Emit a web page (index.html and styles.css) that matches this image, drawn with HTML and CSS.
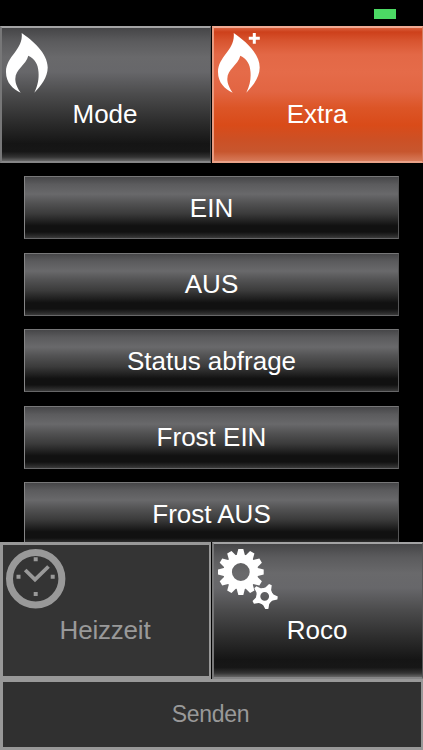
FILE: index.html
```
<!DOCTYPE html>
<html lang="de">
<head>
    <meta charset="UTF-8">
    <meta name="viewport" content="width=device-width, initial-scale=1.0">
    <title>Heizung</title>
    <link rel="stylesheet" href="styles.css">
</head>
<body>
    <div class="app">
        <div class="status-bar">
            <span class="battery"></span>
        </div>

        <div class="tile-row">
            <button class="tile">
                <svg class="tile-icon" viewBox="0 0 60 60">
                    <path d="M15.7 0C26 7 41.700 20 41.700 34.500C41.700 44 35 53 28.300 59.700C32 52 33 46 32.500 39C32 31 29 26 22.300 22.700C20 32 9.300 36 9.300 46C9.300 51 12 56 14.700 59.700C7 56 0 50 0 39C0 23 17.500 17 15.700 0Z"/>
                </svg>
                <span class="tile-label">Mode</span>
            </button>
            <button class="tile active">
                <svg class="tile-icon" viewBox="0 0 60 60">
                    <path d="M15.7 0C26 7 41.700 20 41.700 34.500C41.700 44 35 53 28.300 59.700C32 52 33 46 32.500 39C32 31 29 26 22.300 22.700C20 32 9.300 36 9.300 46C9.300 51 12 56 14.700 59.700C7 56 0 50 0 39C0 23 17.500 17 15.700 0Z"/>
                    <path d="M34.800 0h3v3.800h4v3h-4v4h-3v-4h-4v-3h4Z"/>
                </svg>
                <span class="tile-label">Extra</span>
            </button>
        </div>

        <div class="command-list">
            <button class="command">EIN</button>
            <button class="command">AUS</button>
            <button class="command">Status abfrage</button>
            <button class="command">Frost EIN</button>
            <button class="command">Frost AUS</button>
        </div>

        <div class="tile-row">
            <button class="tile disabled" disabled>
                <svg class="tile-icon" viewBox="0 0 60 60">
                    <circle class="line" cx="29.7" cy="29.700" r="26.200" stroke-width="7"/>
                    <path class="line" d="M19.200 21L29 30.500L42.500 17.500" stroke-width="3.8"/>
                    <path d="M27.700 8.300h4v4h-4ZM27.700 43h4v4h-4ZM10.500 25.700h4v4h-4ZM44.700 25.700h4v4h-4Z"/>
                </svg>
                <span class="tile-label">Heizzeit</span>
            </button>
            <button class="tile">
                <svg class="tile-icon" viewBox="0 0 60 60">
                    <defs>
                        <path id="tooth" d="M-4.300 -16L-2.500 -22.900H2.500L4.300 -16Z"/>
                        <path id="spike" d="M-5.800 -5.500L-3 -8.500L-1.500 -13H1.500L3 -8.500L5.800 -5.500Z"/>
                    </defs>
                    <g transform="translate(22.8 23)">
                        <circle class="ring" r="13.200" stroke-width="8.600"/>
                        <use href="#tooth"/>
                        <use href="#tooth" transform="rotate(30)"/>
                        <use href="#tooth" transform="rotate(60)"/>
                        <use href="#tooth" transform="rotate(90)"/>
                        <use href="#tooth" transform="rotate(120)"/>
                        <use href="#tooth" transform="rotate(150)"/>
                        <use href="#tooth" transform="rotate(180)"/>
                        <use href="#tooth" transform="rotate(210)"/>
                        <use href="#tooth" transform="rotate(240)"/>
                        <use href="#tooth" transform="rotate(270)"/>
                        <use href="#tooth" transform="rotate(300)"/>
                        <use href="#tooth" transform="rotate(330)"/>
                    </g>
                    <g transform="translate(46.7 47.3)">
                        <circle class="ring" r="6.200" stroke-width="3.600"/>
                        <use href="#spike" transform="rotate(26)"/>
                        <use href="#spike" transform="rotate(98)"/>
                        <use href="#spike" transform="rotate(170)"/>
                        <use href="#spike" transform="rotate(242)"/>
                        <use href="#spike" transform="rotate(314)"/>
                    </g>
                </svg>
                <span class="tile-label">Roco</span>
            </button>
        </div>

        <button class="send" disabled>Senden</button>
    </div>
</body>
</html>
```
FILE: styles.css
```
* {
    margin: 0;
    padding: 0;
    box-sizing: border-box;
}

body {
    background: #000;
    font-family: "Liberation Sans", Arial, Helvetica, sans-serif;
    color: #fff;
}

button {
    font-family: inherit;
    color: inherit;
    border: 0;
}

.app {
    display: flex;
    flex-direction: column;
    height: 750px;
    overflow: hidden;
}

.status-bar {
    flex: none;
    display: flex;
    justify-content: flex-end;
    height: 26px;
    padding: 9px 27px 0 0;
}

.battery {
    width: 22px;
    height: 10px;
    background: #4cd964;
}

/* Kacheln */
.tile-row {
    flex: none;
    display: grid;
    grid-template-columns: 211px 211px;
    gap: 1px;
    height: 137px;
}

.tile {
    display: flex;
    flex-direction: column;
    align-items: center;
    padding: 5px 6px 0 4px;
    border: 2px solid;
    border-color: #a3a3a4 #555556 #858586 #777778;
    border-right-width: 1px;
    background: linear-gradient(#454547 0%, #5b5b5d 10%, #69696b 22%, #67676a 33%, #4b4b4c 50%, #2c2c2c 71%, #151515 87%, #171717 93%, #333 97%, #666 100%);
}

.tile.active {
    border-color: #eeaa94 #d47b5d #e9a188 #e89b80;
    background: linear-gradient(#d95f3c 0%, #cd401b 3%, #d85530 10%, #e36846 20%, #e56b49 33%, #e26542 48%, #dc5527 60%, #d94b19 73%, #cc5025 84%, #c7562e 93%, #d77a59 100%);
}

.tile.disabled {
    border: 3px solid #989898;
    border-width: 3px 2px 3px 3px;
    padding: 4px 5px 0 3px;
    background: #343434;
    color: #999;
}

.tile-icon {
    flex: none;
    align-self: flex-start;
    width: 60px;
    height: 60px;
    fill: currentColor;
}

.line,
.ring {
    fill: none;
    stroke: currentColor;
}

.tile-label {
    margin-top: 6px;
    font-size: 26px;
    line-height: 30px;
}

.disabled .tile-label {
    letter-spacing: -0.2px;
}

/* Befehlsliste */
.command-list {
    flex: 1;
    min-height: 0;
    display: flex;
    flex-direction: column;
    gap: 13.5px;
    padding: 13px 24px 0;
    overflow: hidden;
}

.command {
    flex: none;
    height: 63px;
    border: 1px solid;
    border-color: #777778 #555556 #676768 #858586;
    background: linear-gradient(#464648 0%, #5b5b5d 12%, #69696b 28%, #535354 42%, #3b3b3b 60%, #202020 73%, #111 80%, #111 90%, #282828 96%, #3a3a3a 100%);
    font-size: 26px;
    line-height: 30px;
}

.send {
    flex: none;
    height: 71px;
    padding-right: 3px;
    border: 3px solid #989898;
    border-right-width: 2px;
    background: #303030;
    color: #999;
    font-size: 23px;
    letter-spacing: -0.3px;
}
```
